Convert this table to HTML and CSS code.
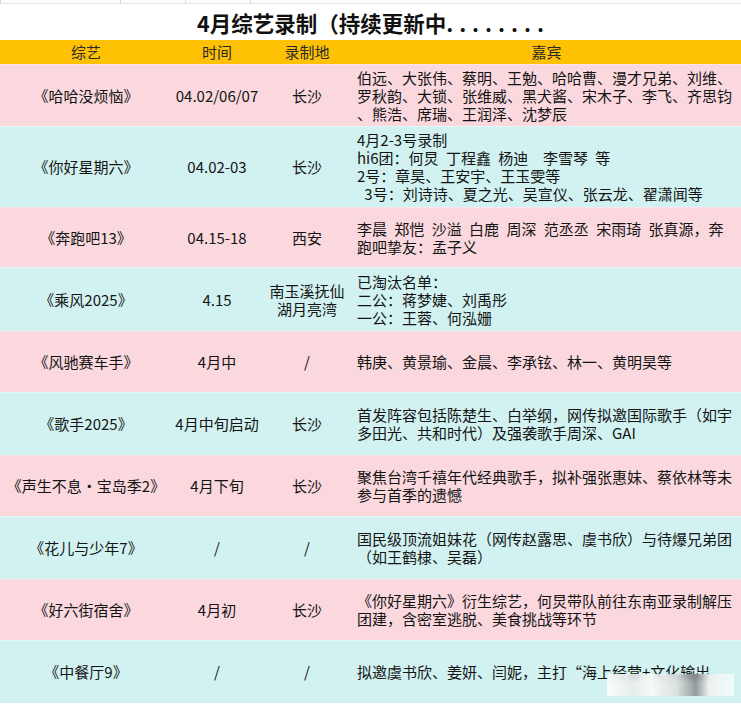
FILE: index.html
```html
<!DOCTYPE html>
<html lang="zh-CN">
<head>
<meta charset="utf-8">
<title>4月综艺录制</title>
<link rel="stylesheet" href="styles.css">
</head>
<body>
<div class="sheet">
  <div class="grid-strip">
    <span class="gl gl-a"></span><span class="gl gl-b"></span><span class="gl gl-c"></span><span class="gl gl-d"></span>
  </div>
  <div class="title">4月综艺录制（持续更新中<span class="dots">........</span></div>
  <div class="row head">
    <div class="cell c">综艺</div>
    <div class="cell c">时间</div>
    <div class="cell c">录制地</div>
    <div class="cell c">嘉宾</div>
  </div>

  <div class="row pink r62">
    <div class="cell c">《哈哈没烦恼》</div>
    <div class="cell c">04.02/06/07</div>
    <div class="cell c">长沙</div>
    <div class="cell g">伯远、大张伟、蔡明、王勉、哈哈曹、漫才兄弟、刘维、<br>罗秋韵、大锁、张维威、黑犬酱、宋木子、李飞、齐思钧<br>、熊浩、席瑞、王润泽、沈梦辰</div>
  </div>

  <div class="row cyan r81">
    <div class="cell c">《你好星期六》</div>
    <div class="cell c">04.02-03</div>
    <div class="cell c">长沙</div>
    <div class="cell g">4月2-3号录制<br>hi6团：何炅 丁程鑫 杨迪  李雪琴 等<br>2号：章昊、王安宇、王玉雯等<br> 3号：刘诗诗、夏之光、吴宣仪、张云龙、翟潇闻等</div>
  </div>

  <div class="row pink r60">
    <div class="cell c">《奔跑吧13》</div>
    <div class="cell c">04.15-18</div>
    <div class="cell c">西安</div>
    <div class="cell g">李晨 郑恺 沙溢 白鹿 周深 范丞丞 宋雨琦 张真源，奔<br>跑吧挚友：孟子义</div>
  </div>

  <div class="row cyan r64">
    <div class="cell c">《乘风2025》</div>
    <div class="cell c">4.15</div>
    <div class="cell c place">南玉溪抚仙<br>湖月亮湾</div>
    <div class="cell g">已淘汰名单：<br>二公：蒋梦婕、刘禹彤<br>一公：王蓉、何泓姗</div>
  </div>

  <div class="row pink r61">
    <div class="cell c">《风驰赛车手》</div>
    <div class="cell c">4月中</div>
    <div class="cell c">/</div>
    <div class="cell g">韩庚、黄景瑜、金晨、李承铉、林一、黄明昊等</div>
  </div>

  <div class="row cyan r63">
    <div class="cell c">《歌手2025》</div>
    <div class="cell c">4月中旬启动</div>
    <div class="cell c">长沙</div>
    <div class="cell g">首发阵容包括陈楚生、白举纲，网传拟邀国际歌手（如宇<br>多田光、共和时代）及强袭歌手周深、GAI</div>
  </div>

  <div class="row pink r61">
    <div class="cell c">《声生不息·宝岛季2》</div>
    <div class="cell c">4月下旬</div>
    <div class="cell c">长沙</div>
    <div class="cell g">聚焦台湾千禧年代经典歌手，拟补强张惠妹、蔡依林等未<br>参与首季的遗憾</div>
  </div>

  <div class="row cyan r63">
    <div class="cell c">《花儿与少年7》</div>
    <div class="cell c">/</div>
    <div class="cell c">/</div>
    <div class="cell g">国民级顶流姐妹花（网传赵露思、虞书欣）与待爆兄弟团<br>（如王鹤棣、吴磊）</div>
  </div>

  <div class="row pink r61">
    <div class="cell c">《好六街宿舍》</div>
    <div class="cell c">4月初</div>
    <div class="cell c">长沙</div>
    <div class="cell g">《你好星期六》衍生综艺，何炅带队前往东南亚录制解压<br>团建，含密室逃脱、美食挑战等环节</div>
  </div>

  <div class="row cyan r63 last">
    <div class="cell c">《中餐厅9》</div>
    <div class="cell c">/</div>
    <div class="cell c">/</div>
    <div class="cell g">拟邀虞书欣、姜妍、闫妮，主打“海上经营+文化输出</div>
    <div class="watermark"></div>
  </div>
</div>
</body>
</html>
```

FILE: styles.css
```css
* { box-sizing: border-box; }

html, body {
  margin: 0;
  padding: 0;
  background: #ffffff;
}

body {
  font-family: "Noto Sans CJK SC", "Noto Sans", sans-serif;
  color: #141414;
  font-size: 15px;
  width: 741px;
  height: 704px;
  overflow: hidden;
}

.sheet {
  width: 741px;
}

.grid-strip {
  position: relative;
  height: 4px;
  border-bottom: 1px solid #e4e4e4;
}

.gl {
  position: absolute;
  top: 0;
  bottom: 0;
  width: 1px;
  background: #dcdcdc;
}
.gl-a { left: 120px; }
.gl-b { left: 185px; }
.gl-c { left: 250px; }
.gl-d { left: 0; }

.title {
  height: 36px;
  display: flex;
  align-items: center;
  justify-content: center;
  font-size: 21.5px;
  font-weight: 700;
  color: #111;
  padding-left: 6px;
  padding-top: 1px;
}

.dots {
  letter-spacing: 6px;
}

.row {
  display: grid;
  grid-template-columns: 172px 90px 90px 1fr;
  position: relative;
}

.head {
  background: #fec103;
  height: 24px;
  font-size: 15px;
  color: #2a2a2a;
}

.pink { background: #fad8de; border-top: 1px solid #fbe4e8; }
.cyan { background: #d1f2f1; border-top: 1px solid #e0f7f6; }

.r60 { height: 60px; }
.r61 { height: 61px; }
.r62 { height: 62px; }
.r63 { height: 63px; }
.r64 { height: 64px; }
.r81 { height: 81px; }

.cell {
  display: flex;
  align-items: center;
  line-height: 18px;
  white-space: nowrap;
}

.c {
  justify-content: center;
  text-align: center;
}

.place {
  line-height: 18px;
}

.g {
  padding-left: 5px;
  white-space: pre;
  display: block;
  align-self: center;
  word-spacing: 4px;
}

.watermark {
  position: absolute;
  left: 607px;
  top: 33px;
  width: 127px;
  height: 22px;
  backdrop-filter: blur(2px);
  background: linear-gradient(90deg,
    rgba(255,255,255,0.85) 0%,
    rgba(235,235,235,0.8) 20%,
    rgba(250,250,250,0.85) 35%,
    rgba(220,220,220,0.8) 55%,
    rgba(120,120,120,0.7) 70%,
    rgba(240,240,240,0.85) 80%,
    rgba(255,255,255,0.7) 100%);
}
```
